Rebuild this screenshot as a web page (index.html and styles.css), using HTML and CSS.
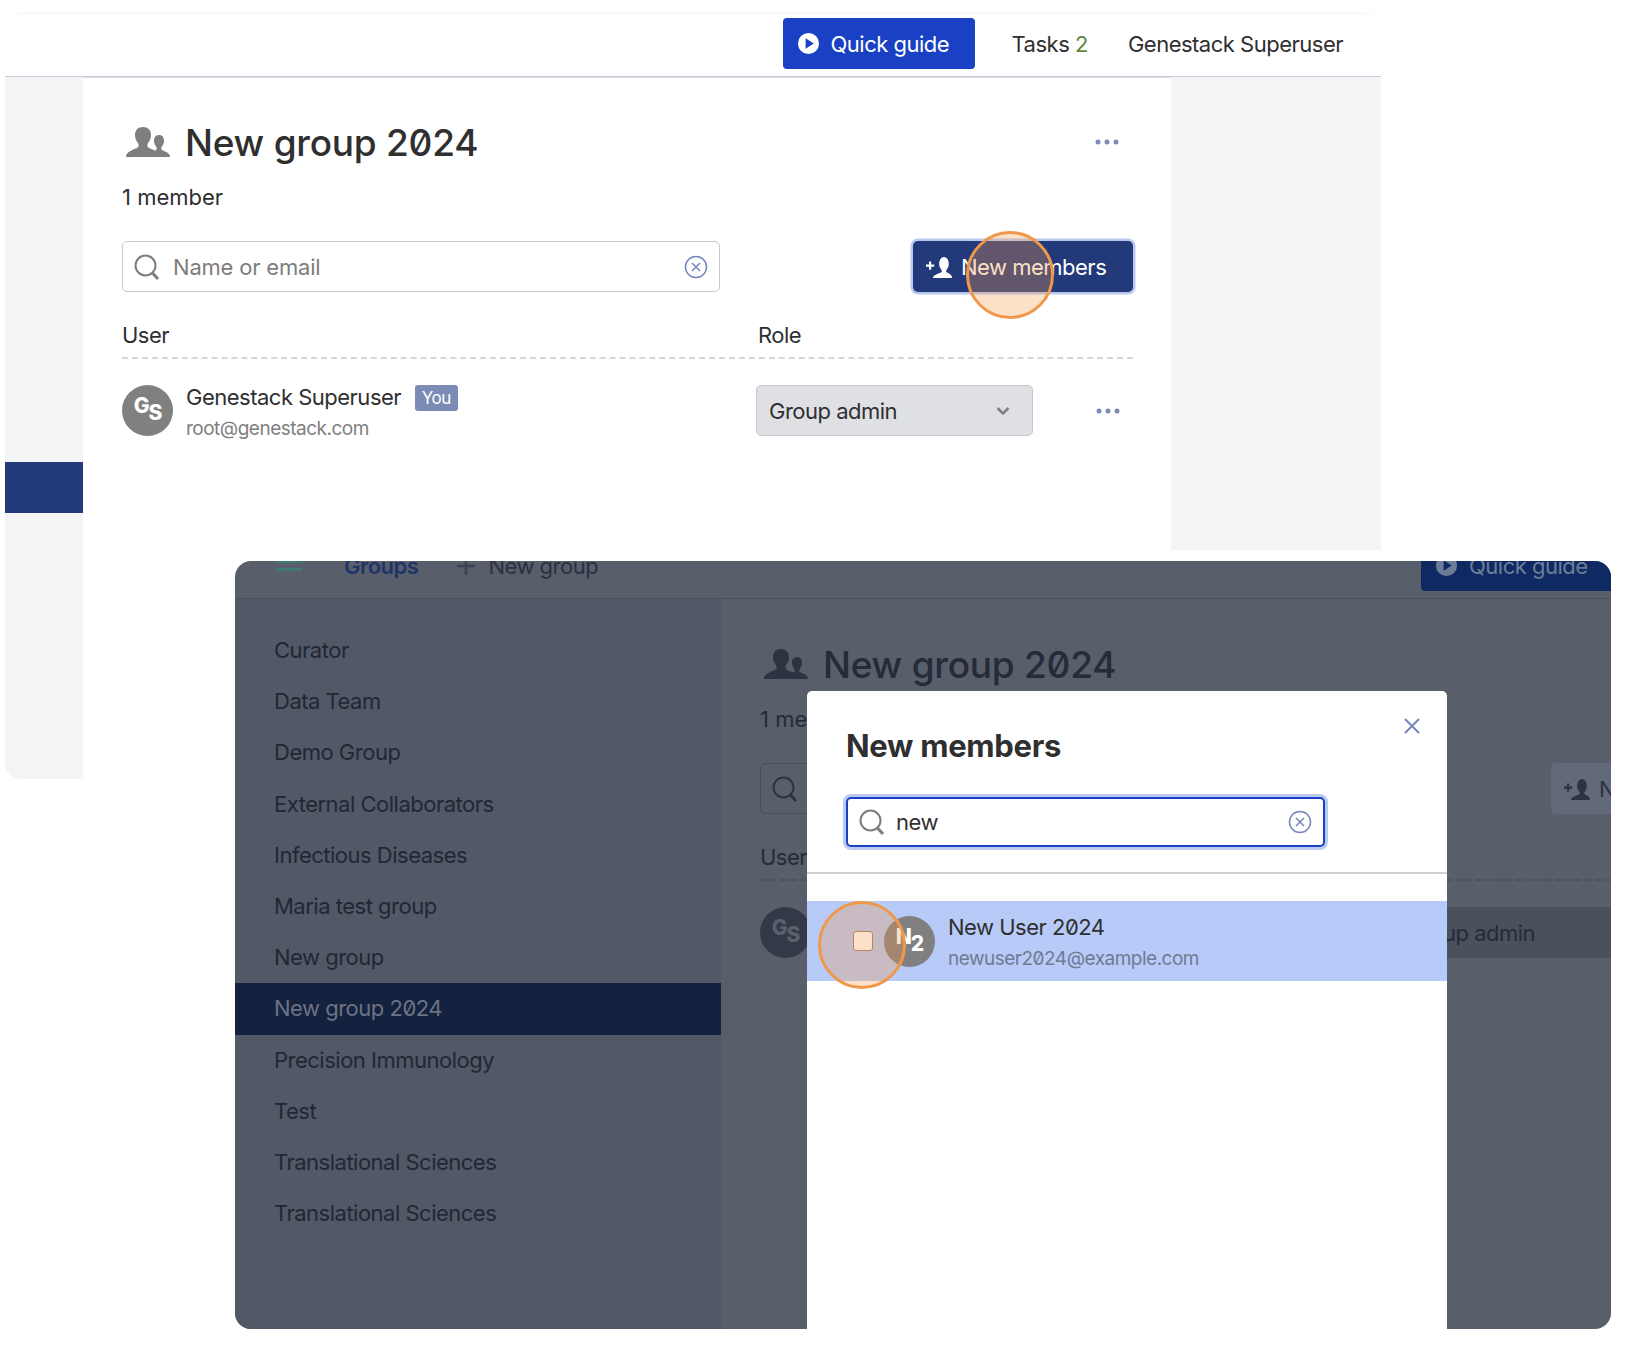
FILE: index.html
```html
<!DOCTYPE html>
<html lang="en">
<head>
    <meta charset="UTF-8">
    <title>New group 2024</title>
    <link rel="stylesheet" href="styles.css">
</head>
<body>
    <svg class="defs" width="0" height="0">
        <symbol id="i-group" viewBox="0 0 44 30">
            <path d="M0 30c0-5 6-7 11-9 2-1 2-3 1-5-2-2-3-5-3-8 0-5 3-8 8-8s8 3 8 8c0 3-1 6-3 8-1 2-1 4 1 5 2 1 4 1.600 6 2.500-2 2-3 4-3 6.500z"/>
            <path d="M44 30c0-4-4-5-8-7-1-1-1-2 0-3.500 1-1.500 2-3.500 2-5.500 0-4-2-6-5-6s-5 2-5 6c0 2 1 4 2 5.500 1 1.500 1 2.500 0 3.500-4 2-8 3-8 7z"/>
        </symbol>
        <symbol id="i-search" viewBox="0 0 26 26">
            <circle cx="11.500" cy="11.500" r="10" fill="none" stroke="currentColor" stroke-width="2"/>
            <path d="M18.500 19l5.500 6" fill="none" stroke="currentColor" stroke-width="3"/>
        </symbol>
        <symbol id="i-clear" viewBox="0 0 24 24">
            <circle cx="12" cy="12" r="10.500" fill="none" stroke="currentColor" stroke-width="1.500"/>
            <path d="M8 8l8 8M16 8l-8 8" fill="none" stroke="currentColor" stroke-width="1.500"/>
        </symbol>
        <symbol id="i-play" viewBox="0 0 24 24">
            <path fill-rule="evenodd" d="M12 1a11 11 0 1 1 0 22a11 11 0 0 1 0-22zM9 6.500v11l8.500-5.500z" fill="currentColor"/>
        </symbol>
        <symbol id="i-add-user" viewBox="0 0 26 22">
            <path d="M0 8.500h3v-3h2.200v3h3v2.200h-3v3h-2.200v-3h-3z" fill="currentColor"/>
            <path d="M7 22c0-3 5-4 8-5.500 1-.6 1-2 .2-3-1.200-1.400-2-3.500-2-5.500 0-4 2-7 4.800-7s4.800 3 4.800 7c0 2-.8 4.100-2 5.500-.8 1-.8 2.400.2 3 3 1.500 5 2.500 5 5.500z" fill="currentColor"/>
        </symbol>
        <symbol id="i-dots" viewBox="0 0 24 6">
            <circle cx="3" cy="3" r="2.500"/><circle cx="12" cy="3" r="2.500"/><circle cx="21" cy="3" r="2.500"/>
        </symbol>
    </svg>

    <!-- Step 1: group page -->
    <section class="window window-top">
        <header class="topbar">
            <div class="topbar-right">
                <a class="quick-guide"><svg class="icon-play"><use href="#i-play"/></svg>Quick guide</a>
                <span class="tasks">Tasks <b>2</b></span>
                <span class="account">Genestack Superuser</span>
            </div>
        </header>
        <div class="layout">
            <aside class="sidebar sidebar-narrow">
                <div class="sidebar-active"></div>
            </aside>
            <main class="group-page">
                <div class="title-row">
                    <svg class="icon-group"><use href="#i-group"/></svg>
                    <h1>New group 2024</h1>
                    <svg class="icon-dots"><use href="#i-dots"/></svg>
                </div>
                <p class="count">1 member</p>
                <div class="tools">
                    <div class="search">
                        <svg class="icon-search"><use href="#i-search"/></svg>
                        <span class="placeholder">Name or email</span>
                        <svg class="icon-clear"><use href="#i-clear"/></svg>
                    </div>
                    <button class="btn-members"><svg class="icon-add"><use href="#i-add-user"/></svg>New members</button>
                </div>
                <div class="table-head">
                    <span>User</span>
                    <span class="role-label">Role</span>
                </div>
                <div class="member">
                    <div class="avatar"><span>G</span><span class="low">S</span></div>
                    <div class="member-info">
                        <div class="member-name">Genestack Superuser <span class="you">You</span></div>
                        <div class="member-mail">root@genestack.com</div>
                    </div>
                    <div class="role-select">Group admin
                        <svg class="chevron" viewBox="0 0 14 10"><path d="M1.500 2l5.500 5.500L12.500 2" fill="none" stroke="currentColor" stroke-width="2.500"/></svg>
                    </div>
                    <svg class="icon-dots"><use href="#i-dots"/></svg>
                </div>
            </main>
            <div class="gutter"></div>
        </div>
        <div class="click-mark mark-button"></div>
    </section>

    <!-- Step 2: new members dialog -->
    <section class="window window-bottom">
        <header class="topbar">
            <div class="topbar-row">
                <span class="burger"><i></i><i></i></span>
                <span class="crumb">Groups</span>
                <span class="new-group"><svg class="plus" viewBox="0 0 18 18"><path d="M9 0v18M0 9h18" stroke="currentColor" stroke-width="2.500"/></svg>New group</span>
                <a class="quick-guide"><svg class="icon-play"><use href="#i-play"/></svg>Quick guide</a>
            </div>
        </header>
        <div class="layout">
            <aside class="sidebar">
                <ul class="group-list">
                    <li>Curator</li>
                    <li>Data Team</li>
                    <li>Demo Group</li>
                    <li>External Collaborators</li>
                    <li>Infectious Diseases</li>
                    <li>Maria test group</li>
                    <li>New group</li>
                    <li class="active">New group 2024</li>
                    <li>Precision Immunology</li>
                    <li>Test</li>
                    <li>Translational Sciences</li>
                    <li>Translational Sciences</li>
                </ul>
            </aside>
            <main class="group-page">
                <div class="title-row">
                    <svg class="icon-group"><use href="#i-group"/></svg>
                    <h1>New group 2024</h1>
                </div>
                <p class="count">1 member</p>
                <div class="tools">
                    <div class="search">
                        <svg class="icon-search"><use href="#i-search"/></svg>
                    </div>
                    <button class="btn-members"><svg class="icon-add"><use href="#i-add-user"/></svg>New members</button>
                </div>
                <div class="table-head">
                    <span>User</span>
                    <span class="role-label">Role</span>
                </div>
                <div class="member">
                    <div class="avatar"><span>G</span><span class="low">S</span></div>
                    <div class="member-info"></div>
                    <div class="role-select">Group admin</div>
                </div>
            </main>
        </div>

        <div class="modal">
            <svg class="modal-close" viewBox="0 0 16 16"><path d="M1 1l14 14M15 1L1 15" fill="none" stroke="currentColor" stroke-width="2"/></svg>
            <div class="modal-head">
                <h2>New members</h2>
                <div class="search search-focus">
                    <svg class="icon-search"><use href="#i-search"/></svg>
                    <span class="search-value">new</span>
                    <svg class="icon-clear"><use href="#i-clear"/></svg>
                </div>
            </div>
            <div class="result">
                <span class="checkbox"></span>
                <div class="avatar"><span>N</span><span class="low">2</span></div>
                <div class="member-info">
                    <div class="member-name">New User 2024</div>
                    <div class="member-mail">newuser2024@example.com</div>
                </div>
            </div>
            <div class="click-mark mark-check"></div>
        </div>
    </section>
</body>
</html>
```

FILE: styles.css
```css
/* General Styles */
body {
    margin: 0;
    background-color: #fff;
    font-family: Inter, "Liberation Sans", sans-serif;
    font-size: 22px;
    letter-spacing: -0.5px;
    font-feature-settings: "zero";
    color: #2f2f2f;
}

.defs {
    position: absolute;
}

/* Windows sit on a free canvas */
.window {
    position: absolute;
    overflow: hidden;
    --page: #fff;
    --side: #f3f4f6;
    --line: #c9cbd6;
    --ink: #2f2f2f;
    --soft: #7c7c7c;
    --field: #c6c8d0;
    --accent: #223a7a;
    --select: #dfe0e4;
    --select-line: #c5c7cc;
    background-color: var(--page);
    color: var(--ink);
}

.window-top {
    left: 5px;
    top: 12px;
    width: 1376px;
    height: 767px;
    border-radius: 16px 16px 0 16px;
}

.window-bottom {
    left: 235px;
    top: 561px;
    width: 1376px;
    height: 768px;
    border-radius: 16px;
    --page: #585e6a;
    --side: #515866;
    --line: #4a505c;
    --ink: #252b38;
    --soft: #3b414e;
    --field: #484e5a;
    --accent: #626a79;
    --select: #4a505c;
    --select-line: #4a505c;
}

/* Top bar */
.topbar {
    display: flow-root;
    height: 64px;
    border-bottom: 1px solid var(--line);
    box-shadow: 0 1px 0 #dcdde3;
    background: linear-gradient(#f8f8f9, #fff 4px);
}

.window-bottom .topbar {
    height: 37px;
    box-shadow: none;
    background: none;
}

.topbar-right {
    display: flex;
    justify-content: flex-end;
    align-items: center;
    padding: 6px 38px 0 0;
}

.topbar-row {
    display: flex;
    align-items: center;
    margin-top: -21px;
    padding-left: 41px;
}

.quick-guide {
    display: flex;
    align-items: center;
    box-sizing: border-box;
    width: 192px;
    height: 51px;
    padding-left: 14px;
    border-radius: 4px;
    background-color: #1a41c4;
    color: #fff;
}

.icon-play {
    width: 23px;
    height: 23px;
    margin-right: 11px;
}

.tasks {
    margin-left: 37px;
}

.tasks b {
    font-weight: 400;
    color: #5f8a3c;
}

.account {
    margin-left: 40px;
}

.burger {
    display: flex;
    flex-direction: column;
    gap: 5px;
    width: 26px;
}

.burger i {
    height: 3px;
    background-color: #3f7a70;
}

.crumb {
    margin-left: 42px;
    font-weight: 600;
    color: #1e3566;
}

.new-group {
    display: flex;
    align-items: center;
    margin-left: 39px;
    color: #2a3140;
}

.plus {
    width: 18px;
    height: 18px;
    margin-right: 13px;
    color: #3a414f;
}

.window-bottom .quick-guide {
    margin-left: auto;
    background-color: #0f2a63;
    color: #6d7c99;
    border-radius: 4px 0 0 4px;
    width: 190px;
}

/* Columns under the bar */
.layout {
    display: flex;
    height: calc(100% - 65px);
}

.window-bottom .layout {
    height: calc(100% - 38px);
}

.sidebar {
    flex: 0 0 486px;
    background-color: var(--side);
}

.sidebar-narrow {
    flex-basis: 78px;
    padding-top: 385px;
}

.sidebar-active {
    height: 51px;
    background-color: #223a7a;
}

.gutter {
    flex: 0 0 210px;
    height: 473px;
    background-color: var(--side);
}

.group-list {
    list-style: none;
    margin: 0;
    padding: 26px 0 0;
}

.group-list li {
    height: 51.2px;
    line-height: 51px;
    padding-left: 39px;
    color: #212735;
}

.group-list li.active {
    background-color: #15223f;
    color: #6c7382;
}

/* Group page */
.group-page {
    flex: 1;
    min-width: 0;
    padding: 45px 38px 0 39px;
}

.window-bottom .group-page {
    padding-right: 0;
}

.window-bottom .tools,
.window-bottom .member {
    width: 1011px;
}

.title-row {
    display: flex;
    align-items: center;
    height: 40px;
}

.icon-group {
    width: 44px;
    height: 30px;
    margin: 0 15px 0 4px;
    fill: #7f7f7f;
}

.window-bottom .icon-group {
    fill: #2c3341;
}

h1 {
    margin: 0;
    font-size: 37px;
    font-weight: 500;
    letter-spacing: -0.25px;
    white-space: nowrap;
}

.icon-dots {
    width: 24px;
    height: 6px;
    margin-left: auto;
    margin-right: 14px;
    fill: #7c8bb5;
}

.count {
    margin: 20px 0 0;
    line-height: 30px;
    letter-spacing: 0;
}

.tools {
    display: flex;
    justify-content: space-between;
    margin-top: 29px;
}

.search {
    display: flex;
    align-items: center;
    box-sizing: border-box;
    width: 598px;
    height: 51px;
    padding: 0 11px;
    border: 1.5px solid var(--field);
    border-radius: 5px;
    background-color: var(--page);
}

.icon-search {
    flex: none;
    width: 26px;
    height: 26px;
    margin-right: 13px;
    color: #7d7d7d;
}

.window-bottom .group-page .icon-search {
    color: #2c3341;
}

.placeholder {
    color: #7d7d7d;
    letter-spacing: -0.2px;
}

.icon-clear {
    flex: none;
    width: 24px;
    height: 24px;
    margin-left: auto;
    color: #7587b8;
}

.btn-members {
    display: flex;
    align-items: center;
    box-sizing: border-box;
    width: 220px;
    height: 51px;
    padding: 0 0 0 13px;
    border: 0;
    border-radius: 5px;
    background-color: var(--accent);
    box-shadow: 0 0 0 2.5px #b9c8f2;
    font: inherit;
    letter-spacing: inherit;
    color: #fff;
    white-space: nowrap;
}

.window-bottom .btn-members {
    box-shadow: none;
    color: #2c3341;
    overflow: hidden;
    flex: none;
}

.icon-add {
    flex: none;
    width: 26px;
    height: 22px;
    margin-right: 9px;
}

.table-head {
    display: flex;
    margin-top: 28px;
    padding-bottom: 7px;
    line-height: 30px;
    border-bottom: 2px dashed #d6d6d6;
}

.window-bottom .table-head {
    border-bottom-color: #4c525e;
}

.table-head span:first-child {
    width: 636px;
}

.member {
    display: flex;
    align-items: center;
    margin-top: 26px;
}

.avatar {
    flex: none;
    display: flex;
    justify-content: center;
    width: 51px;
    height: 51px;
    border-radius: 50%;
    background-color: #808080;
    color: #fff;
    font-weight: 800;
    font-size: 21px;
    line-height: 42px;
    letter-spacing: -1px;
}

.avatar .low {
    margin-top: 7px;
}

.window-bottom .group-page .avatar {
    background-color: #333946;
    color: #5a606c;
}

.member-info {
    flex: 0 0 570px;
    margin: -8px 0 -8px 13px;
    padding-top: 4px;
}

.member-name {
    line-height: 30px;
}

.you {
    display: inline-block;
    margin-left: 8px;
    padding: 0 7px;
    border-radius: 3px;
    background-color: #7c8bb5;
    color: #fff;
    font-size: 17px;
    line-height: 26px;
    vertical-align: 1px;
}

.member-mail {
    margin-top: 2px;
    font-size: 19px;
    line-height: 30px;
    color: #808080;
}

.role-select {
    display: flex;
    flex: 0 0 277px;
    align-items: center;
    box-sizing: border-box;
    height: 51px;
    padding: 0 14px 0 12px;
    border: 1.5px solid var(--select-line);
    border-radius: 5px;
    background-color: var(--select);
    white-space: nowrap;
}

.chevron {
    width: 14px;
    height: 10px;
    margin: 0 8px 0 auto;
    color: #7f7f7f;
}

.member .icon-dots {
    margin-left: 63px;
    margin-right: 0;
}

/* Dialog */
.modal {
    position: absolute;
    left: 572px;
    top: 130px;
    bottom: 0;
    width: 640px;
    border-radius: 5px 5px 0 0;
    background-color: #fff;
    color: #2f2f2f;
    overflow: hidden;
    --page: #fff;
}

.modal-head {
    height: 183px;
    box-sizing: border-box;
    padding: 35px 0 0 39px;
    border-bottom: 2px solid #d2d2d2;
}

h2 {
    margin: 0 0 31px;
    font-size: 31px;
    font-weight: 700;
    line-height: 40px;
    letter-spacing: -0.3px;
}

.search-focus {
    width: 479px;
    height: 50px;
    border: 2px solid #1a41c4;
    box-shadow: 0 0 0 3px #bccaf2;
}

.search-value {
    margin-left: -2px;
    color: #2f2f2f;
}

.modal-close {
    position: absolute;
    top: 27px;
    right: 27px;
    width: 16px;
    height: 16px;
    color: #7587b8;
}

.result {
    display: flex;
    align-items: center;
    height: 80px;
    margin-top: 27px;
    padding-left: 46px;
    background-color: #b7caf8;
}

.result .member-mail {
    color: #6f7a92;
}

.checkbox {
    flex: none;
    box-sizing: border-box;
    width: 20px;
    height: 20px;
    margin-right: 11px;
    border: 1px solid #9d7f72;
    border-radius: 3px;
    background-color: #fff;
}

/* Orange click markers */
.click-mark {
    position: absolute;
    box-sizing: border-box;
    width: 88px;
    height: 88px;
    border: 3.5px solid #f0984a;
    border-radius: 50%;
    background-color: rgba(244, 152, 74, 0.3);
}

.mark-button {
    left: 961px;
    top: 219px;
}

.mark-check {
    left: 11px;
    top: 210px;
}
```
